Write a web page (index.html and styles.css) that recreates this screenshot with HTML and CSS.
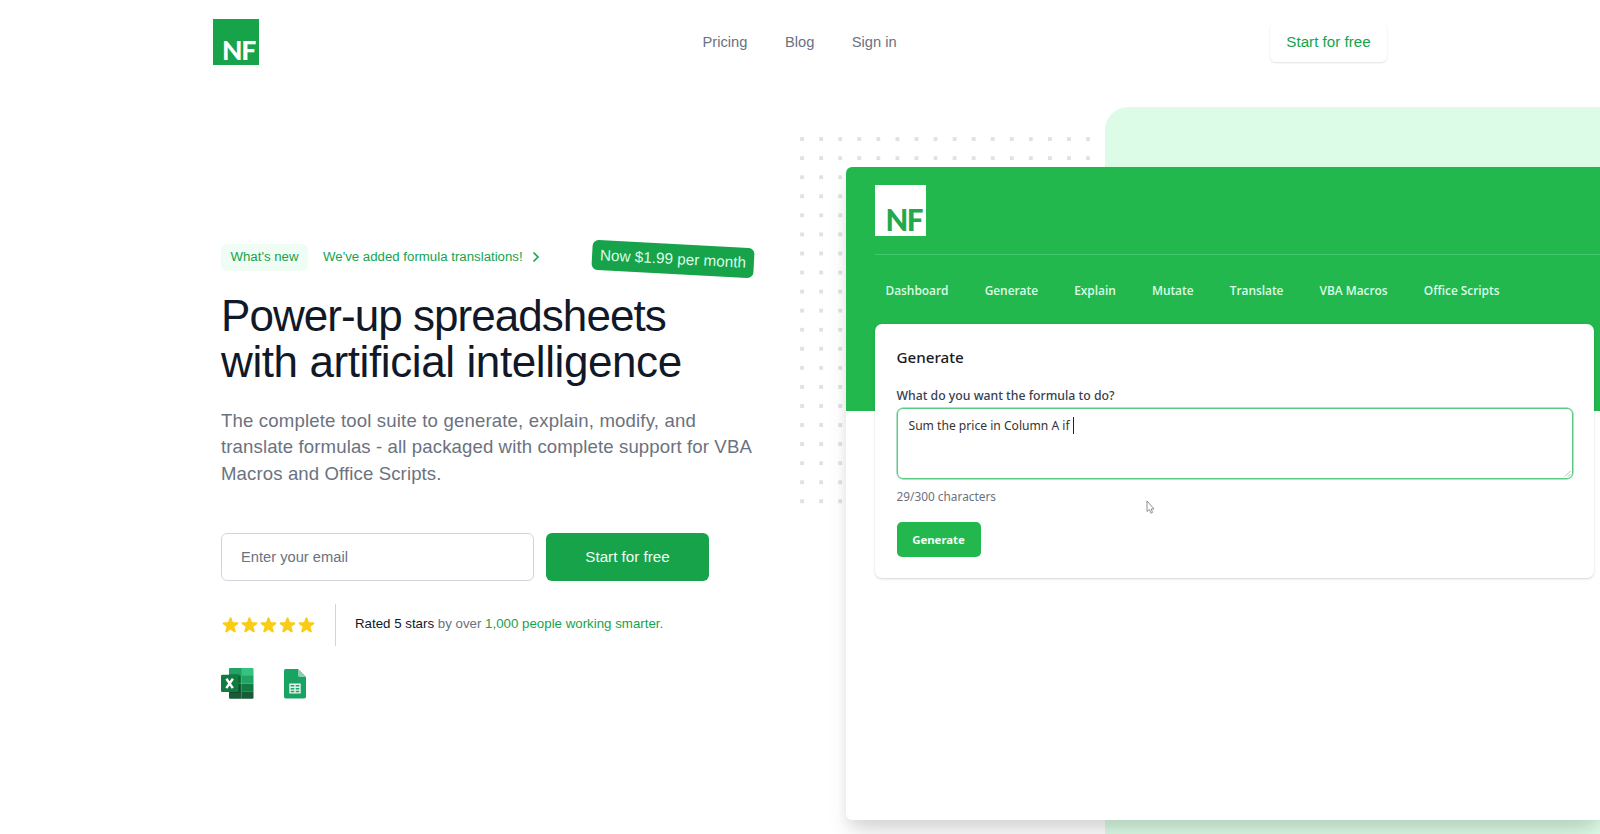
FILE: index.html
```html
<!DOCTYPE html>
<html lang="en">
<head>
<meta charset="utf-8">
<title>NF</title>
<link rel="stylesheet" href="styles.css">
</head>
<body>
<header class="header">
  <a class="logo">NF</a>
  <nav class="nav"><a>Pricing</a><a>Blog</a><a>Sign in</a></nav>
  <a class="header-cta">Start for free</a>
</header>
<main class="hero">
  <section class="copy">
    <div class="news">
      <span class="pill">What's new</span>
      <a class="news-link">We've added formula translations!
        <svg class="chevron" viewBox="0 0 8 12"><path d="M1.5 1.5 6 6l-4.500 4.500"/></svg>
      </a>
      <span class="badge">Now $1.99 per month</span>
    </div>
    <h1 class="title"><span class="title-a">Power-up spreadsheets</span><span class="title-b">with artificial intelligence</span></h1>
    <p class="lead"><span class="lead-a">The complete tool suite to generate, explain, modify, and</span><br>translate formulas - all packaged with complete support for VBA<br>Macros and Office Scripts.</p>
    <form class="signup">
      <div class="email">Enter your email</div>
      <div class="submit">Start for free</div>
    </form>
    <div class="rating">
      <div class="stars">
        <svg class="star" viewBox="1 1 18 18"><use href="#star"/></svg>
        <svg class="star" viewBox="1 1 18 18"><use href="#star"/></svg>
        <svg class="star" viewBox="1 1 18 18"><use href="#star"/></svg>
        <svg class="star" viewBox="1 1 18 18"><use href="#star"/></svg>
        <svg class="star" viewBox="1 1 18 18"><use href="#star"/></svg>
      </div>
      <p class="rated"><b>Rated 5 stars</b> by over <em>1,000 people working smarter.</em></p>
    </div>
    <div class="apps">
      <svg class="excel" viewBox="0 0 33 31">
        <path fill="#21a366" d="M9 0h12v8H8V1a1 1 0 0 1 1-1z"/>
        <path fill="#33c481" d="M20.500 0H31.500a1 1 0 0 1 1 1v7h-12z"/>
        <path fill="#107c41" d="M8 7.700h12.500v7.800H8z"/>
        <path fill="#21a366" d="M20.400 7.700h12.100v7.800h-12.100z"/>
        <path fill="#185c37" d="M8 15.500h12.500v15.200H9a1 1 0 0 1-1-1z"/>
        <path fill="#107c41" d="M20.400 15.500h12.100v7.700h-12.100z"/>
        <path fill="#185c37" d="M20.400 23.200h12.100v6.500a1 1 0 0 1-1 1h-11.100z"/>
        <path fill="#000" opacity=".18" d="M8 6h9.500a1.500 1.500 0 0 1 1.500 1.500v16a1.500 1.500 0 0 1-1.500 1.500H8z"/>
        <rect x="0" y="6.800" width="17.500" height="17.200" rx="1.300" fill="#107c41"/>
        <path stroke="#fff" stroke-width="2.400" fill="none" d="M5.400 10.700l6.400 9.400M11.900 10.700l-6.600 9.400"/>
      </svg>
      <svg class="sheets" viewBox="0 0 22 30">
        <path fill="#18a362" d="M1.800 0H14l8 8v19.700a1.800 1.800 0 0 1-1.800 1.800H1.800A1.800 1.800 0 0 1 0 27.700V1.800A1.800 1.800 0 0 1 1.800 0z"/>
        <path fill="#87ceac" d="M14 0l8 8h-6.200A1.800 1.800 0 0 1 14 6.200z"/>
        <path fill="#e7f5ee" fill-rule="evenodd" d="M5.300 14.500h11.400v10H5.300zM6.700 15.900v1.700h3.600v-1.700zm5 0v1.700h3.600v-1.700zm-5 3v1.500h3.600v-1.500zm5 0v1.500h3.600v-1.500zm-5 2.800v1.500h3.600v-1.500zm5 0v1.500h3.600v-1.500z"/>
      </svg>
    </div>
  </section>
  <section class="showcase">
    <div class="dots"></div>
    <div class="backdrop"></div>
    <div class="window">
      <div class="window-head">
        <span class="window-logo">NF</span>
        <nav class="tabs"><a>Dashboard</a><a>Generate</a><a>Explain</a><a>Mutate</a><a>Translate</a><a>VBA Macros</a><a>Office Scripts</a></nav>
      </div>
      <div class="card">
        <h2 class="card-title">Generate</h2>
        <label class="label">What do you want the formula to do?</label>
        <div class="textarea">Sum the price in Column A if<i class="caret"></i>
          <svg class="grip" viewBox="0 0 8 8"><path d="M1 7.500 7.500 1M4.500 7.500l3-3"/></svg>
        </div>
        <p class="count">29/300 characters</p>
        <span class="generate">Generate</span>
        <svg class="cursor" viewBox="0 0 9 14"><path d="M1 1v10.500l2.300-2 1.700 3.700 1.600-.8-1.600-3.400h3z"/></svg>
      </div>
    </div>
  </section>
</main>
<svg class="defs"><defs><path id="star" d="M9.049 2.927c.3-.921 1.603-.921 1.902 0l1.070 3.292a1 1 0 00.95.69h3.462c.969 0 1.371 1.240.588 1.810l-2.800 2.034a1 1 0 00-.364 1.118l1.070 3.292c.3.921-.755 1.688-1.540 1.118l-2.800-2.034a1 1 0 00-1.175 0l-2.800 2.034c-.784.57-1.838-.197-1.539-1.118l1.070-3.292a1 1 0 00-.364-1.118L2.980 8.720c-.783-.57-.38-1.810.588-1.810h3.461a1 1 0 00.951-.69l1.070-3.292z"/></defs></svg>
</body>
</html>
```
FILE: styles.css
```css
* { box-sizing: border-box; }
body {
  margin: 0;
  width: 1600px;
  height: 834px;
  overflow: hidden;
  background: #fff;
  font-family: "Liberation Sans", Arial, sans-serif;
  color: #6b7280;
}
h1, h2, p { margin: 0; font-weight: 400; }
svg { display: block; }
.defs { display: none; }

.header {
  display: flex;
  align-items: center;
  height: 84px;
  padding: 0 213px;
}
.logo, .window-logo {
  display: flex;
  align-items: flex-end;
  justify-content: flex-end;
  font-family: Lato, sans-serif;
  font-weight: 900;
}
.logo {
  width: 46px;
  height: 46px;
  padding: 0 4px 1px 0;
  background: #16a34a;
  color: #fff;
  font-size: 26.500px;
  line-height: 27px;
  letter-spacing: -1.200px;
}
.nav {
  display: flex;
  gap: 37.500px;
  margin-left: 443.5px;
  font-size: 14.7px;
}
.header-cta {
  margin-left: auto;
  width: 117px;
  height: 40px;
  border-radius: 6px;
  box-shadow: 0 1px 2px rgba(0, 0, 0, .12);
  color: #16a34a;
  font-size: 15.2px;
  line-height: 40px;
  text-align: center;
}

.hero {
  display: grid;
  grid-template-columns: 790px 810px;
  height: 750px;
}
.copy { padding: 156px 0 0 221px; }
.news {
  display: flex;
  align-items: center;
  height: 34px;
  color: #16a34a;
  font-size: 13.25px;
}
.pill {
  width: 87px;
  height: 27px;
  border-radius: 6px;
  background: #f0fdf4;
  line-height: 26px;
  text-align: center;
}
.news-link {
  display: flex;
  align-items: center;
  gap: 9px;
  margin: -1px 0 0 15px;
  white-space: nowrap;
}
.chevron { width: 8px; height: 12px; margin-top: 1px; fill: none; stroke: #16a34a; stroke-width: 1.6; }
.badge {
  margin: 4px 0 0 52.500px;
  width: 162px;
  height: 30px;
  border-radius: 6px;
  background: #16a34a;
  color: #dcfce7;
  font-size: 15.3px;
  line-height: 30px;
  text-align: center;
  white-space: nowrap;
  transform: rotate(3deg);
}
.title {
  margin-top: 19px;
  color: #111827;
  font-size: 44px;
  line-height: 45.8px;
  white-space: nowrap;
}
.title-a, .title-b { display: block; }
.title-a { letter-spacing: -.95px; }
.title-b { letter-spacing: -.4px; }
.lead {
  margin-top: 23px;
  font-size: 18.6px;
  line-height: 26.7px;
  letter-spacing: .11px;
  white-space: nowrap;
}
.lead-a { letter-spacing: .16px; }
.signup { display: flex; gap: 12px; margin-top: 45px; }
.email {
  width: 313px;
  height: 48px;
  padding-left: 19px;
  border: 1px solid #d1d5db;
  border-radius: 6px;
  font-size: 14.7px;
  line-height: 46px;
}
.submit {
  width: 163px;
  height: 48px;
  border-radius: 6px;
  background: #16a34a;
  color: #f0fdf4;
  font-size: 15.2px;
  line-height: 48px;
  text-align: center;
}
.rating { display: flex; align-items: center; margin-top: 23px; height: 42px; }
.stars { display: flex; padding-top: 1px; }
.star { width: 19px; height: 19px; fill: #facc15; }
.rated {
  height: 42px;
  margin-left: 19px;
  padding-left: 19px;
  border-left: 1px solid #d1d5db;
  font-size: 13.3px;
  line-height: 40px;
  white-space: nowrap;
}
.rated b { color: #111827; font-weight: 400; }
.rated em { color: #16a34a; font-style: normal; }
.apps { display: flex; gap: 30px; margin-top: 22px; }
.excel { width: 33px; height: 31px; }
.sheets { width: 22px; height: 30px; margin-top: 1px; }

.showcase { position: relative; padding: 83.400px 0 0 55.500px; }
.dots {
  position: absolute;
  left: 10px;
  top: 53px;
  width: 296px;
  height: 367px;
  background: conic-gradient(from 90deg at 15.070px 15.070px, #dfe1e6 90deg, transparent 0) 4px 4px / 19.070px 19.070px;
}
.backdrop {
  position: absolute;
  left: 315px;
  top: 23px;
  width: 495px;
  height: 727px;
  border-radius: 23px 0 0 0;
  background: #dcfce7;
}
.window {
  position: relative;
  width: 754.500px;
  height: 653px;
  border-radius: 6px 0 0 6px;
  background: #fff;
  box-shadow: 0 19px 24px -5px rgba(0, 0, 0, .12), 0 5px 12px rgba(0, 0, 0, .06);
  font-family: "Noto Sans", "Open Sans", sans-serif;
}
.window-head {
  height: 244px;
  padding: 18px 0 0 29.500px;
  border-radius: 6px 0 0 0;
  background: #22b84e;
}
.window-logo {
  width: 51px;
  height: 51px;
  padding: 0 4px 1px 0;
  background: #fff;
  color: #22a94c;
  font-size: 29.500px;
  line-height: 31px;
  letter-spacing: -1.500px;
}
.tabs {
  display: flex;
  gap: 36.200px;
  margin-top: 18px;
  padding: 23.500px 0 0 10.500px;
  border-top: 1px solid #43c56b;
  color: #dcfce7;
  font-family: "Open Sans", sans-serif;
  font-weight: 600;
  font-size: 11.95px;
  line-height: 24px;
  letter-spacing: -.04px;
  white-space: nowrap;
}
.card {
  position: relative;
  width: 719px;
  height: 254px;
  margin: -87px 0 0 29.500px;
  padding: 20px 21px 0 21.500px;
  border-radius: 7px;
  background: #fff;
  box-shadow: 0 1px 2px rgba(0, 0, 0, .12), 0 1px 4px rgba(0, 0, 0, .05);
}
.card-title { color: #1b1b1f; font-size: 15.2px; font-weight: 500; line-height: 26px; }
.label { display: block; margin-top: 15px; color: #374151; font-size: 12.25px; font-weight: 500; line-height: 21px; }
.textarea {
  position: relative;
  display: flex;
  height: 71.500px;
  margin-top: 1.500px;
  padding: 8px 11px;
  border: 1.500px solid #5cc983;
  border-radius: 6px;
  box-shadow: 0 0 0 .5px #5cc983;
  color: #333;
  font-size: 12.1px;
  line-height: 18px;
}
.caret { width: 1px; height: 17px; margin-left: 3px; background: #222; }
.grip { position: absolute; right: 1px; bottom: 1px; width: 7px; height: 7px; stroke: #999; stroke-width: .8; }
.count { margin-top: 6.500px; font-size: 11.85px; line-height: 20px; }
.generate {
  display: block;
  width: 84px;
  height: 34.500px;
  margin-top: 16.500px;
  border-radius: 5px;
  background: #22b84e;
  color: #f0fdf4;
  font-size: 11.4px;
  font-weight: 700;
  line-height: 35px;
  text-align: center;
}
.cursor { position: absolute; left: 271px; top: 175.500px; width: 9px; height: 14px; fill: #fff; stroke: #777; stroke-width: .8; }
```
